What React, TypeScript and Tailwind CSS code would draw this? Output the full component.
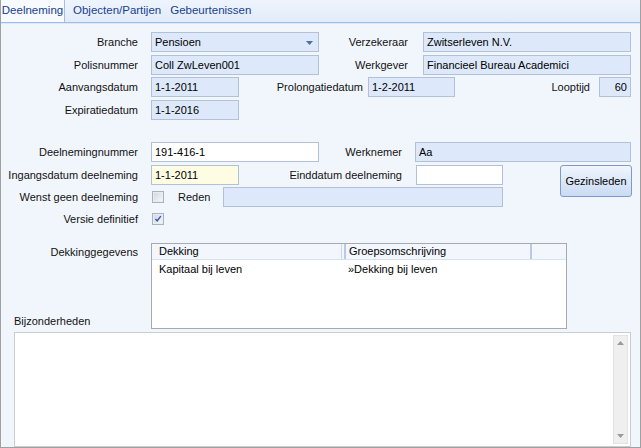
import React from "react";

const field =
  "h-[20px] border border-[#b3c1d6] bg-[#dde9fa] px-[3px] leading-[18px] text-black";

function Label({ w, children, className = "" }: { w: string; children: React.ReactNode; className?: string }) {
  return <div className={`${w} shrink-0 text-right leading-[20px] text-[#111] ${className}`}>{children}</div>;
}

function Check({ checked }: { checked?: boolean }) {
  return (
    <div className="h-[12px] w-[12px] border border-[#a3b3ca] bg-[#e9ebee] p-[1px]">
      <div className="relative h-full w-full bg-gradient-to-br from-[#d4d8de] to-[#f4f5f7]">
        {checked && (
          <svg viewBox="0 0 8 8" className="absolute inset-0 h-full w-full">
            <path d="M1.5 4 L3.2 6 L6.8 1.2" stroke="#2a55a8" strokeWidth="1.4" fill="none" />
          </svg>
        )}
      </div>
    </div>
  );
}

export default function App() {
  return (
    <div
      className="flex h-[448px] w-[641px] flex-col border-x border-b border-[#a0a0a0] bg-[#f1f6fd] text-[11px]"
      style={{ fontFamily: '"Liberation Sans", Arial, sans-serif' }}
    >
      {/* Tabs */}
      <div className="flex h-[22px] items-stretch bg-gradient-to-b from-[#eef4fc] to-[#e2ecf9] text-[11.5px] text-[#17408f]">
        <div className="flex w-[64px] items-center justify-center border-r border-[#a9bfd9] bg-[#f7fafe]">
          Deelneming
        </div>
        <div className="flex items-center pl-[8px] pr-[9px]">Objecten/Partijen</div>
        <div className="flex items-center">Gebeurtenissen</div>
      </div>
      <div className="h-[1px] bg-[#9fbde6]" />
      <div className="h-[1px] bg-[#dde8f7]" />

      <div className="flex flex-1 flex-col pt-[8px]">
        {/* Section 1 */}
        <div className="flex h-[20px]">
          <Label w="w-[137px]">Branche</Label>
          <div className={`${field} relative ml-[13px] w-[168px]`}>
            Pensioen
            <svg viewBox="0 0 7 4" className="absolute right-[5px] top-[8px] h-[4px] w-[7px]">
              <path d="M0 0 H7 L3.5 4 Z" fill="#4d6fa8" />
            </svg>
          </div>
          <Label w="w-[89px]">Verzekeraar</Label>
          <div className={`${field} ml-[15px] w-[208px]`}>Zwitserleven N.V.</div>
        </div>
        <div className="mt-[3px] flex h-[20px]">
          <Label w="w-[137px]">Polisnummer</Label>
          <div className={`${field} ml-[13px] w-[168px]`}>Coll ZwLeven001</div>
          <Label w="w-[89px]">Werkgever</Label>
          <div className={`${field} ml-[15px] w-[208px]`}>Financieel Bureau Academici</div>
        </div>
        <div className="mt-[2px] flex h-[20px]">
          <Label w="w-[137px]">Aanvangsdatum</Label>
          <div className={`${field} ml-[13px] w-[88px]`}>1-1-2011</div>
          <Label w="w-[124px]">Prolongatiedatum</Label>
          <div className={`${field} ml-[5px] w-[87px]`}>1-2-2011</div>
          <Label w="w-[135px]">Looptijd</Label>
          <div className={`${field} ml-[9px] w-[32px] text-right`}>60</div>
        </div>
        <div className="mt-[3px] flex h-[20px]">
          <Label w="w-[137px]">Expiratiedatum</Label>
          <div className={`${field} ml-[13px] w-[88px]`}>1-1-2016</div>
        </div>

        {/* Section 2 */}
        <div className="mt-[22px] flex h-[20px]">
          <Label w="w-[137px]">Deelnemingnummer</Label>
          <div className={`${field} ml-[13px] w-[168px] !bg-white`}>191-416-1</div>
          <Label w="w-[83px]">Werknemer</Label>
          <div className={`${field} ml-[13px] w-[216px]`}>Aa</div>
        </div>
        <div className="mt-[3px] flex">
          <div className="flex w-[502px] flex-col">
            <div className="flex h-[20px]">
              <Label w="w-[137px]">Ingangsdatum deelneming</Label>
              <div className={`${field} ml-[13px] w-[88px] !bg-[#fefde4]`}>1-1-2011</div>
              <Label w="w-[163px]">Einddatum deelneming</Label>
              <div className={`${field} ml-[14px] w-[87px] !bg-white`} />
            </div>
            <div className="mt-[2px] flex h-[20px] items-center">
              <Label w="w-[137px]">Wenst geen deelneming</Label>
              <div className="ml-[14px]">
                <Check />
              </div>
              <div className="ml-[14px] w-[45px] leading-[20px] text-[#111]">Reden</div>
              <div className={`${field} w-[280px]`} />
            </div>
          </div>
          <button className="ml-[57px] h-[32px] w-[72px] rounded-[3px] border border-[#7e9bc8] bg-gradient-to-b from-[#f0f5fc] to-[#c9dbf3] text-[11px] text-black">
            Gezinsleden
          </button>
        </div>
        <div className="mt-[2px] flex h-[20px] items-center">
          <Label w="w-[137px]">Versie definitief</Label>
          <div className="ml-[14px]">
            <Check checked />
          </div>
        </div>

        {/* Section 3 */}
        <div className="mt-[14px] flex h-[86px]">
          <div className="flex w-[137px] flex-col justify-between">
            <div className="pt-[1px] text-right leading-[16px] text-[#111]">Dekkinggegevens</div>
            <div className="pl-[13px] leading-[16px] text-[#111]">Bijzonderheden</div>
          </div>
          <div className="ml-[13px] w-[416px] border border-[#a7a9ad] bg-white">
            <div className="flex h-[16px] border-b border-[#d5e2f3] bg-[#f3f7fd] leading-[15px]">
              <div className="w-[190px] border-r border-[#c8d8ee] pl-[7px]">Dekking</div>
              <div className="ml-[2px] w-[188px] border-x-2 border-x-[#b7cbe8] pl-[3px]">
                Groepsomschrijving
              </div>
            </div>
            <div className="flex h-[18px] items-center">
              <div className="w-[196px] pl-[7px]">Kapitaal bij leven</div>
              <div>»Dekking bij leven</div>
            </div>
          </div>
        </div>

        <div className="ml-[13px] mt-[3px] flex h-[115px] w-[617px] border border-[#c9ccd1] bg-white">
          <div className="flex-1" />
          <div className="my-[2px] mr-[2px] flex w-[15px] flex-col items-center justify-between border border-[#e3e3e3] bg-[#efefef] py-[5px]">
            <svg viewBox="0 0 7 4" className="h-[4px] w-[7px]">
              <path d="M0 4 H7 L3.5 0 Z" fill="#9a9a9a" />
            </svg>
            <svg viewBox="0 0 7 4" className="h-[4px] w-[7px]">
              <path d="M0 0 H7 L3.5 4 Z" fill="#9a9a9a" />
            </svg>
          </div>
        </div>
      </div>
    </div>
  );
}
